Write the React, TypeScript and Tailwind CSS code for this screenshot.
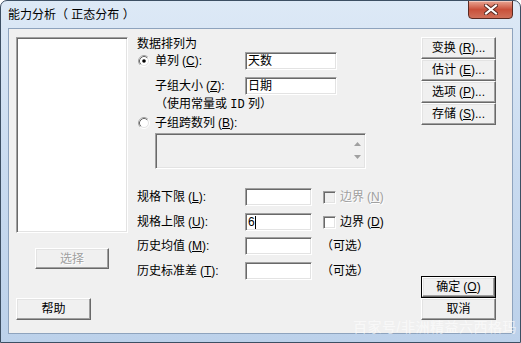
import React from "react";

const sunken =
  "border border-t-[#a0a0a0] border-l-[#a0a0a0] border-b-white border-r-white shadow-[inset_1px_1px_0_#696969,inset_-1px_-1px_0_#e3e3e3]";
const raised =
  "border border-t-white border-l-white border-b-[#696969] border-r-[#696969] shadow-[inset_-1px_-1px_0_#a0a0a0,inset_1px_1px_0_#e3e3e3] bg-[#f0f0f0]";

function Radio({ checked }: { checked?: boolean }) {
  return (
    <svg width="12" height="12" viewBox="0 0 12 12" className="shrink-0">
      <circle cx="6" cy="6" r="5.5" fill="none" stroke="#ffffff" />
      <path d="M2.11 9.89 A5.5 5.5 0 0 1 9.89 2.11" fill="none" stroke="#a0a0a0" />
      <circle cx="6" cy="6" r="4.5" fill="#ffffff" stroke="#e3e3e3" />
      <path d="M2.82 9.18 A4.5 4.5 0 0 1 9.18 2.82" fill="none" stroke="#696969" />
      {checked && <circle cx="6" cy="6" r="1.8" fill="#000000" />}
    </svg>
  );
}

function Check({ disabled }: { disabled?: boolean }) {
  return (
    <div
      className={`w-[13px] h-[13px] shrink-0 ${sunken} ${
        disabled ? "bg-[#f0f0f0]" : "bg-white"
      }`}
    />
  );
}

function Key({ k, disabled }: { k: string; disabled?: boolean }) {
  return (
    <span className={`ml-[3px] ${disabled ? "text-[#a0a0a0]" : ""}`}>
      (<span className="underline underline-offset-[1px]">{k}</span>)
    </span>
  );
}

function Btn({
  children,
  className = "",
  disabled,
  isDefault
}: {
  children: React.ReactNode;
  className?: string;
  disabled?: boolean;
  isDefault?: boolean;
}) {
  return (
    <div className={`${isDefault ? "border border-black" : ""} ${className}`}>
      <div
        className={`h-full flex items-center justify-center ${raised} ${
          disabled ? "text-[#a0a0a0] [text-shadow:1px_1px_0_#ffffff]" : "text-black"
        }`}
      >
        {children}
      </div>
    </div>
  );
}

function TextBox({ w, children }: { w: string; children?: React.ReactNode }) {
  return (
    <div className={`h-[18px] ${w} bg-white ${sunken} flex items-center pl-[2px]`}>
      {children}
    </div>
  );
}

export default function App() {
  return (
    <div className="w-[521px] h-[343px] relative overflow-hidden rounded-t-[7px] border border-[#3d4f63] bg-gradient-to-b from-[#dde9f6] via-[#c9dbf0] to-[#bcd1ea] font-['Liberation_Sans','Noto_Sans_CJK_SC',sans-serif] text-[12px] text-black">
      {/* title bar */}
      <div className="h-[27px] flex items-start justify-between">
        <div className="pl-[7px] pt-[6px] leading-[16px] text-[12px] text-black">
          能力分析（ 正态分布 ）
        </div>
        <div className="mr-[7px] w-[45px] h-[19px] -mt-[1px] rounded-b-[4px] border border-[#5a2a22] bg-gradient-to-b from-[#e8a593] via-[#c9503a] to-[#d0705a] flex items-center justify-center shadow-[inset_0_1px_0_#f3c8bc]">
          <svg width="14" height="11" viewBox="0 0 14 11">
            <path d="M2 1.5 L12 9.5 M12 1.5 L2 9.5" stroke="#5a2a22" strokeWidth="4" strokeLinecap="square" />
            <path d="M2 1.5 L12 9.5 M12 1.5 L2 9.5" stroke="#ffffff" strokeWidth="2" strokeLinecap="square" />
          </svg>
        </div>
      </div>

      {/* client area */}
      <div className="ml-[7px] w-[505px] h-[306px] bg-[#f0f0f0] border border-[#8ea3bd] flex pl-[7px] pt-[8px]">
        {/* left column */}
        <div className="w-[112px] flex flex-col">
          <div className={`h-[196px] bg-white ${sunken}`} />
          <Btn disabled className="mt-[15px] ml-[19px] w-[74px] h-[21px]">
            选择
          </Btn>
          <Btn className="mt-[29px] w-[75px] h-[22px]">帮助</Btn>
        </div>

        {/* middle column */}
        <div className="ml-[9px] w-[275px] flex flex-col">
          <div className="h-[14px] leading-[14px]">数据排列为</div>

          <div className="mt-[1px] h-[18px] flex items-center">
            <div className="w-[108px] flex items-center pl-[1px]">
              <Radio checked />
              <span className="ml-[5px] leading-[14px]">
                单列<Key k="C" />:
              </span>
            </div>
            <TextBox w="w-[92px]">天数</TextBox>
          </div>

          <div className="mt-[7px] h-[18px] flex items-center">
            <div className="w-[108px] pl-[18px] leading-[14px]">
              子组大小<Key k="Z" />:
            </div>
            <TextBox w="w-[92px]">日期</TextBox>
          </div>

          <div className="mt-[2px] h-[14px] leading-[14px] pl-[18px]">
            （使用常量或 <span className="font-['Liberation_Mono',monospace]">ID</span> 列）
          </div>

          <div className="mt-[4px] h-[16px] flex items-center pl-[1px]">
            <Radio />
            <span className="ml-[5px] leading-[14px]">
              子组跨数列<Key k="B" />:
            </span>
          </div>

          <div className={`mt-[2px] ml-[18px] w-[211px] h-[36px] bg-[#f0f0f0] ${sunken} flex justify-end`}>
            <div className="w-[16px] flex flex-col items-center justify-center gap-[9px] pb-[1px]">
              <svg width="7" height="4" viewBox="0 0 7 4">
                <path d="M0 4 L3.5 0 L7 4 Z" fill="#a0a0a0" />
              </svg>
              <svg width="7" height="4" viewBox="0 0 7 4">
                <path d="M0 0 L3.5 4 L7 0 Z" fill="#a0a0a0" />
              </svg>
            </div>
          </div>

          <div className="mt-[19px] h-[18px] flex items-center">
            <div className="w-[108px] leading-[14px]">
              规格下限<Key k="L" />:
            </div>
            <TextBox w="w-[67px]" />
            <div className="ml-[11px]">
              <Check disabled />
            </div>
            <span className="ml-[4px] text-[#a0a0a0] [text-shadow:1px_1px_0_#ffffff] leading-[14px]">
              边界<Key k="N" disabled />
            </span>
          </div>

          <div className="mt-[7px] h-[18px] flex items-center">
            <div className="w-[108px] leading-[14px]">
              规格上限<Key k="U" />:
            </div>
            <TextBox w="w-[67px]">
              <span>6</span>
              <span className="w-[1px] h-[13px] bg-black" />
            </TextBox>
            <div className="ml-[11px]">
              <Check />
            </div>
            <span className="ml-[4px] leading-[14px]">
              边界<Key k="D" />
            </span>
          </div>

          <div className="mt-[6px] h-[18px] flex items-center">
            <div className="w-[108px] leading-[14px]">
              历史均值<Key k="M" />:
            </div>
            <TextBox w="w-[67px]" />
            <span className="ml-[9px] leading-[14px]">（可选）</span>
          </div>

          <div className="mt-[7px] h-[18px] flex items-center">
            <div className="w-[108px] leading-[14px]">
              历史标准差<Key k="T" />:
            </div>
            <TextBox w="w-[67px]" />
            <span className="ml-[9px] leading-[14px]">（可选）</span>
          </div>
        </div>

        {/* right column */}
        <div className="ml-[9px] w-[75px] flex flex-col">
          <Btn className="h-[22px]">
            变换<Key k="R" />...
          </Btn>
          <Btn className="h-[22px]">
            估计<Key k="E" />...
          </Btn>
          <Btn className="h-[22px]">
            选项<Key k="P" />...
          </Btn>
          <Btn className="h-[22px]">
            存储<Key k="S" />...
          </Btn>
          <Btn isDefault className="mt-[151px] h-[22px]">
            确定<Key k="O" />
          </Btn>
          <Btn className="h-[22px]">取消</Btn>
        </div>
      </div>

      {/* watermark */}
      <div className="absolute left-[352px] top-[318px] text-[14px] leading-[16px] text-white/60 tracking-[0.5px]">
        百家号/非洲精益六西格玛
      </div>
    </div>
  );
}
